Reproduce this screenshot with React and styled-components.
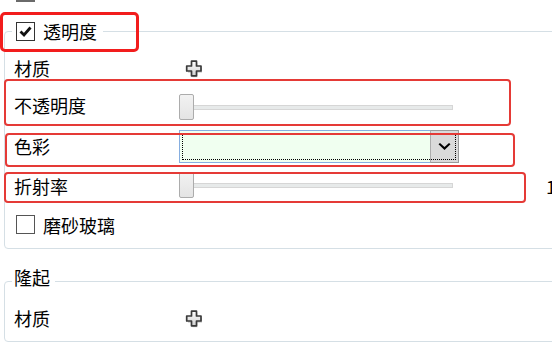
import React from "react";
import styled, { createGlobalStyle } from "styled-components";

const Global = createGlobalStyle`
  html, body { margin: 0; padding: 0; background: #fff; overflow: hidden; }
  body { font-family: "Noto Sans CJK SC", "Noto Sans", sans-serif; color: #000; }
`;

const Page = styled.div`
  position: relative;
  width: 552px;
  height: 343px;
  overflow: hidden;
`;

const TopStub = styled.div`
  margin-left: 16px;
  width: 19px;
  height: 2px;
  background: #6a6a6a;
`;

const Group = styled.fieldset`
  margin: ${(p) => p.$mt}px 0 0 4px;
  width: 620px;
  min-inline-size: 0;
  box-sizing: border-box;
  border: 1px solid #d5dfe5;
  border-radius: 4px;
  padding: ${(p) => p.$pt}px 0 ${(p) => p.$pb}px 9px;
`;

const Legend = styled.legend`
  display: flex;
  align-items: center;
  gap: 8px;
  margin-left: -2px;
  padding: 0 ${(p) => p.$pright}px ${(p) => p.$pbottom || 0}px ${(p) => p.$pleft}px;
  font-size: 18px;
  line-height: 20px;
  height: ${(p) => 20 + (p.$pbottom || 0)}px;
  box-sizing: border-box;
`;

const Row = styled.div`
  display: grid;
  grid-template-columns: 165px 274px 93px 1fr;
  align-items: center;
  height: ${(p) => p.$h}px;
  font-size: 18px;
  line-height: 20px;
`;

const Label = styled.span`
  white-space: nowrap;
  position: relative;
  top: ${(p) => p.$dy || 0}px;
`;

const Value = styled.span`
  white-space: nowrap;
  grid-column: 4;
`;

const CheckRow = styled.label`
  display: flex;
  align-items: center;
  gap: 8px;
  margin-left: 2px;
  grid-column: 1 / span 2;
  position: relative;
  top: ${(p) => p.$dy || 0}px;
`;

const Box = styled.span`
  display: inline-flex;
  align-items: center;
  justify-content: center;
  width: 19px;
  height: 19px;
  box-sizing: border-box;
  border: 1px solid ${(p) => (p.$checked ? "#333" : "#555")};
  background: #fff;
  flex: none;
`;

const PlusWrap = styled.span`
  display: inline-flex;
  margin-left: 5px;
  margin-top: 2px;
`;

const Slider = styled.div`
  position: relative;
  width: 274px;
  height: 26px;
  top: ${(p) => p.$dy || 0}px;
`;

const Track = styled.div`
  position: absolute;
  left: 0;
  right: 0;
  top: 11px;
  height: 5px;
  box-sizing: border-box;
  background: #e7eaea;
  border: 1px solid #d6d6d6;
`;

const Thumb = styled.div`
  position: absolute;
  left: 0;
  top: 0;
  width: 15px;
  height: 26px;
  box-sizing: border-box;
  border: 1px solid #acacac;
  border-radius: 2px;
  background: linear-gradient(#f2f2f2, #e4e4e4);
`;

const Combo = styled.div`
  grid-column: 2 / span 2;
  display: flex;
  width: 280px;
  height: 33px;
  box-sizing: border-box;
  border: 1px solid #86aee0;
  background: #f0fff0;
  position: relative;
`;

const ComboText = styled.div`
  flex: 1;
`;

const ComboButton = styled.div`
  width: 27px;
  display: flex;
  align-items: center;
  justify-content: center;
  background: #dadada;
  border: 1px solid #9a9a9a;
  border-left-color: #acacac;
  margin: -1px -1px -1px 0;
`;

const FocusRect = styled.div`
  position: absolute;
  left: 2px;
  top: 2px;
  right: 2px;
  bottom: 2px;
  border: 1px dotted #000;
  pointer-events: none;
`;

const Highlight = styled.div`
  position: absolute;
  box-sizing: border-box;
  border: ${(p) => p.$w}px solid ${(p) => p.$c};
  border-radius: ${(p) => p.$r}px;
  pointer-events: none;
`;

const Plus = () => (
  <svg width="20" height="19" viewBox="0 0 20 19">
    <defs>
      <linearGradient id="pg" x1="0" y1="0" x2="0" y2="1">
        <stop offset="0" stopColor="#ffffff" />
        <stop offset="1" stopColor="#cfcfcf" />
      </linearGradient>
    </defs>
    <path
      d="M7.5 2 H12.5 V6.5 H17 V11.5 H12.5 V16 H7.5 V11.5 H3 V6.5 H7.5 Z"
      fill="#999"
      opacity="0.45"
      transform="translate(1 1.2)"
    />
    <path
      d="M7.5 1.2 H12.5 V6 H17 V11 H12.5 V15.8 H7.5 V11 H2.7 V6 H7.5 Z"
      fill="url(#pg)"
      stroke="#3a3a3a"
      strokeWidth="1.7"
      strokeLinejoin="round"
    />
  </svg>
);

const Check = () => (
  <svg width="15" height="15" viewBox="0 0 15 15">
    <path d="M2.5 7.5 L6 11 L12.5 3.5" fill="none" stroke="#111" strokeWidth="2.8" />
  </svg>
);

const Chevron = () => (
  <svg width="13" height="8" viewBox="0 0 13 8">
    <path d="M0.5 1.2 L6.5 7 L12.5 1.2 L11 0 L6.5 4 L2 0 Z" fill="#000" />
  </svg>
);

const SliderControl = ({ dy }) => (
  <Slider $dy={dy}>
    <Track />
    <Thumb />
  </Slider>
);

export default function App() {
  return (
    <>
      <Global />
      <Page>
        <TopStub />
        <Group $mt={19} $pt={9} $pb={0}>
          <Legend $pleft={4} $pright={6}>
            <Box $checked>
              <Check />
            </Box>
            <span>透明度</span>
          </Legend>
          <Row $h={36}>
            <Label>材质</Label>
            <PlusWrap>
              <Plus />
            </PlusWrap>
          </Row>
          <Row $h={40}>
            <Label $dy={-1}>不透明度</Label>
            <SliderControl dy={1} />
          </Row>
          <Row $h={41}>
            <Label $dy={-1}>色彩</Label>
            <Combo>
              <ComboText />
              <ComboButton>
                <Chevron />
              </ComboButton>
              <FocusRect />
            </Combo>
          </Row>
          <Row $h={38}>
            <Label $dy={0}>折射率</Label>
            <SliderControl dy={-1} />
            <Value>1</Value>
          </Row>
          <Row $h={43}>
            <CheckRow $dy={-2}>
              <Box />
              <span>磨砂玻璃</span>
            </CheckRow>
          </Row>
        </Group>
        <Group $mt={18} $pt={5} $pb={5}>
          <Legend $pleft={2} $pright={5} $pbottom={8}>
            <span>隆起</span>
          </Legend>
          <Row $h={36}>
            <Label>材质</Label>
            <PlusWrap>
              <Plus />
            </PlusWrap>
          </Row>
        </Group>

        <Highlight $w={3} $c="#f21d1d" $r={5} style={{ left: 0, top: 12, width: 139, height: 40 }} />
        <Highlight $w={2} $c="#e53a36" $r={4} style={{ left: 4, top: 79, width: 507, height: 47 }} />
        <Highlight $w={2} $c="#e53a36" $r={4} style={{ left: 5, top: 133, width: 510, height: 34 }} />
        <Highlight $w={2} $c="#e53a36" $r={4} style={{ left: 4, top: 172, width: 522, height: 31 }} />
      </Page>
    </>
  );
}
